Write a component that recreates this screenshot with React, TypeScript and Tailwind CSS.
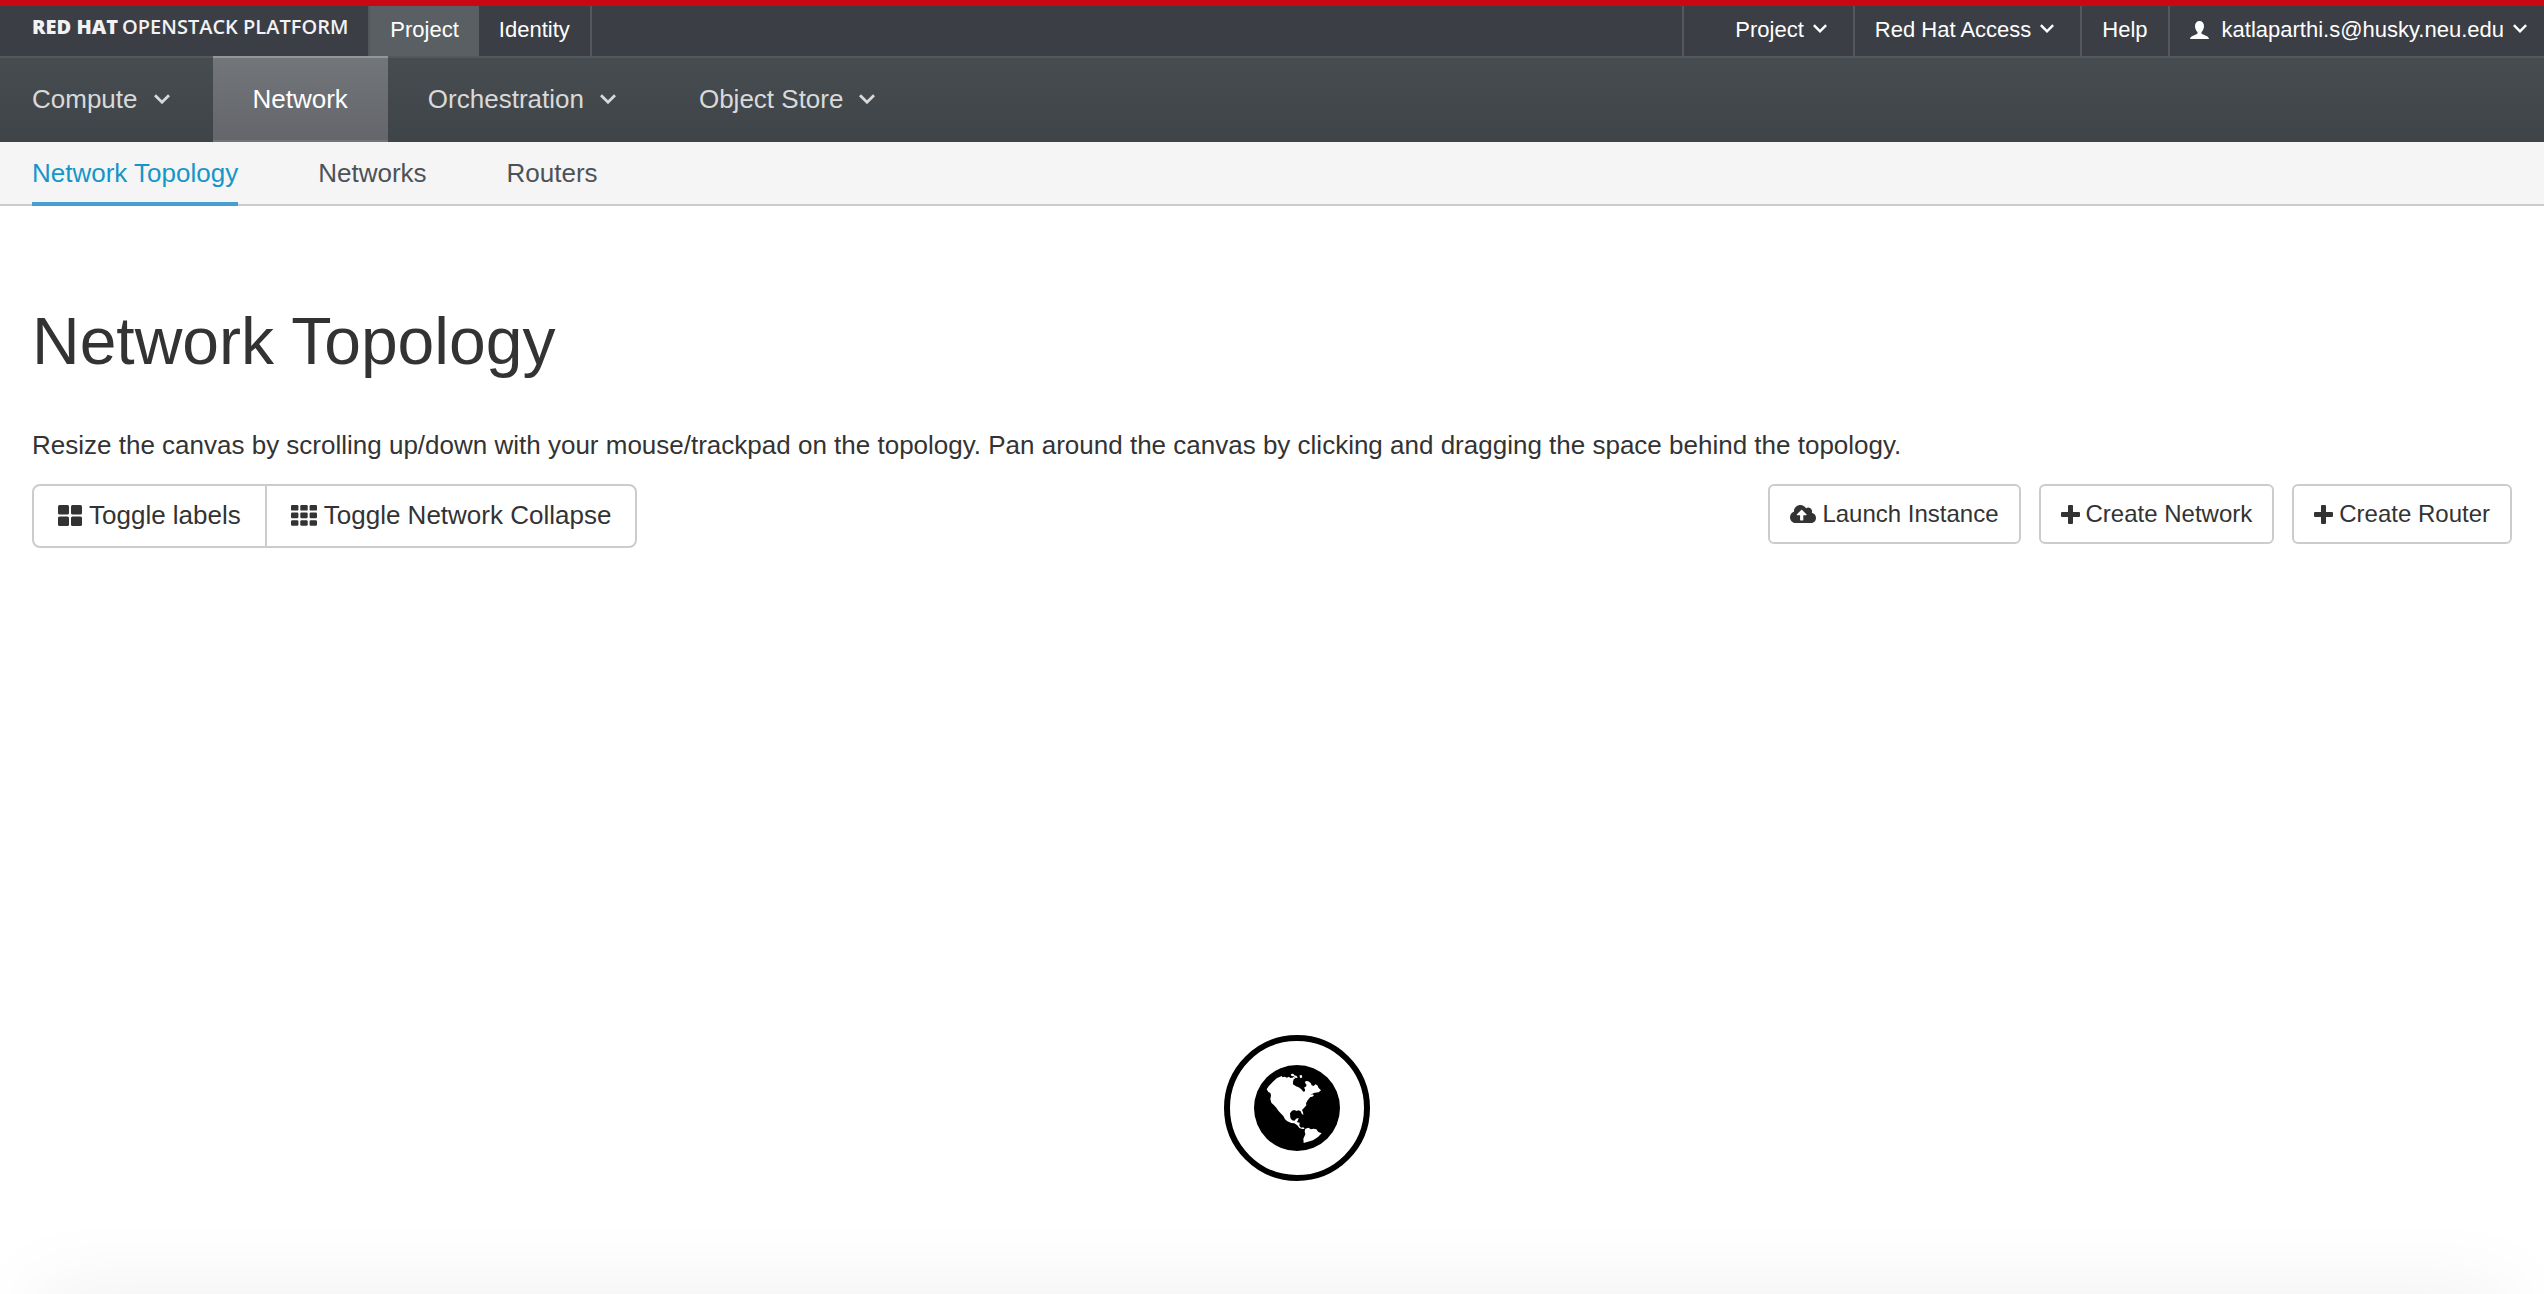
import type { ReactNode } from "react";
import { FaCloudUploadAlt } from "react-icons/fa";

function Chevron({ className }: { className: string }) {
  return (
    <svg className={className} viewBox="0 0 16 10" fill="none" stroke="currentColor" strokeWidth="2.8" aria-hidden="true">
      <path d="M1 1.2 8 8.2 15 1.2" />
    </svg>
  );
}

function UserIcon() {
  return (
    <svg className="h-[18px] w-[19px]" viewBox="0 0 19 18" fill="currentColor" aria-hidden="true">
      <path d="M9.5 0C6.800 0 5 2 5 5c0 2.300 1 4.600 2.200 5.800.6.900.5 1.900-.3 2.300L2 15.200C.8 15.800.1 16.700 0 18h19c-.1-1.300-.8-2.200-2-2.800l-4.900-2.100c-.8-.4-.9-1.400-.3-2.300C13 9.600 14 7.300 14 5c0-3-1.800-5-4.500-5z" />
    </svg>
  );
}

function PlusIcon() {
  return (
    <svg className="h-[19px] w-[19px]" viewBox="0 0 19 19" fill="currentColor" aria-hidden="true">
      <path d="M8 0h3a1 1 0 0 1 1 1v6h6a1 1 0 0 1 1 1v3a1 1 0 0 1-1 1h-6v6a1 1 0 0 1-1 1H8a1 1 0 0 1-1-1v-6H1a1 1 0 0 1-1-1V8a1 1 0 0 1 1-1h6V1a1 1 0 0 1 1-1z" />
    </svg>
  );
}

function GridLarge() {
  return (
    <svg className="h-[21px] w-[24px]" viewBox="0 0 24 21" fill="currentColor" aria-hidden="true">
      {[0, 13].map((x) => [0, 11.5].map((y) => <rect key={`${x}-${y}`} x={x} y={y} width="11" height="9.500" rx="1.500" />))}
    </svg>
  );
}

function GridSmall() {
  return (
    <svg className="h-[21px] w-[26px]" viewBox="0 0 26 21" fill="currentColor" aria-hidden="true">
      {[0, 9.3, 18.6].map((x) => [0, 7.6, 15.2].map((y) => <rect key={`${x}-${y}`} x={x} y={y} width="7.400" height="5.600" rx="1.200" />))}
    </svg>
  );
}

function Globe() {
  return (
    <svg className="h-[86px] w-[86px]" viewBox="14 15 258 258" aria-hidden="true">
      <circle cx="143" cy="144" r="129" fill="#000" />
      <g fill="#fff">
        <path d="M52 88 58 79 70 66 82 55 92 50 98 48 99 52 106 50 113 53 119 50 123 54 130 53 134 50 138 55 133 58 131 66 131 73 140 79 148 82 156 88 162 95 167 94 167 88 164 83 171 79 171 73 167 69 169 63 177 64 184 69 187 76 193 78 198 73 204 76 208 84 215 91 208 97 196 98 189 101 183 106 190 103 194 106 189 110 183 111 175 121 170 130 171 136 164 144 158 150 161 157 162 164 158 163 154 154 147 151 142 153 135 150 128 152 122 160 123 173 128 181 136 182 140 176 148 174 145 183 142 186 151 188 150 197 155 203 162 202 166 207 159 207 150 204 144 196 135 190 126 189 114 184 107 178 102 168 94 160 87 152 81 143 74 136 66 128 63 118 65 106 63 99 57 96Z" />
        <path d="M168 206 178 203 184 208 193 206 201 208 207 216 217 220 206 231 191 241 163 249 162 236 168 223 166 214Z" />
        <path d="M125 42 132 41 135 46 142 48 145 53 139 54 133 49 126 48Z" />
        <path d="M151 46 157 45 159 52 154 55 151 51Z" />
      </g>
    </svg>
  );
}

function TopLink({ children, className }: { children: ReactNode; className: string }) {
  return (
    <a href="#" className={`flex h-full items-center border-l-2 border-[#55575c] pb-0.5 ${className}`}>
      {children}
    </a>
  );
}

function NavItem({ label }: { label: string }) {
  return (
    <button type="button" className="flex items-center gap-4 pr-[43px] pb-0.5 pl-10">
      {label}
      <Chevron className="h-[10px] w-4" />
    </button>
  );
}

function ActionButton({ icon, label }: { icon: ReactNode; label: string }) {
  return (
    <button type="button" className="flex h-[60px] items-center gap-1.5 rounded-md border-2 border-[#ccc] bg-white px-5 text-2xl">
      {icon}
      {label}
    </button>
  );
}

export default function App() {
  return (
    <div className="flex min-h-screen flex-col bg-white font-['Liberation_Sans',Arial,sans-serif] text-[26px] leading-9 text-[#333]">
      <header>
        <div className="flex h-14 items-stretch border-t-[6px] border-[#c90813] bg-[#3b3e45] text-[22px] leading-7 text-white">
          <a href="#" className="flex items-center gap-1 pr-5 pb-2 pl-8 font-['Open_Sans',sans-serif] text-xl text-[#f2f2f2]">
            <span className="font-extrabold">RED HAT</span>
            <span className="font-semibold">OPENSTACK PLATFORM</span>
          </a>
          <nav aria-label="Areas" className="flex border-x-2 border-[#55575c]">
            <a href="#" className="flex items-center bg-[#5a5f63] px-5 pb-0.5">Project</a>
            <a href="#" className="flex items-center px-5 pb-0.5">Identity</a>
          </nav>
          <nav aria-label="Account" className="ml-auto flex">
            <TopLink className="gap-[9px] pr-[26px] pl-[51px]">
              Project
              <Chevron className="mb-1 h-[9px] w-[14px]" />
            </TopLink>
            <TopLink className="gap-[9px] pr-[26px] pl-5">
              Red Hat Access
              <Chevron className="mb-1 h-[9px] w-[14px]" />
            </TopLink>
            <TopLink className="px-5">Help</TopLink>
            <TopLink className="gap-[9px] pr-[17px] pl-5">
              <UserIcon />
              <span className="pl-1">katlaparthi.s@husky.neu.edu</span>
              <Chevron className="mb-1 h-[9px] w-[14px]" />
            </TopLink>
          </nav>
        </div>
        <nav aria-label="Main" className="flex h-[86px] border-t-2 border-[#55575c] bg-linear-to-b from-[#474c50] to-[#3f4448] text-[#d9d9d9]">
          <div className="-ml-2 flex">
            <NavItem label="Compute" />
          </div>
          <a href="#" aria-current="page" className="-mt-0.5 flex items-center border-y-2 border-t-[#94969a] border-b-[#727479] bg-linear-to-b from-[#72757a] to-[#64666b] px-10 text-white">
            Network
          </a>
          <NavItem label="Orchestration" />
          <NavItem label="Object Store" />
        </nav>
        <nav aria-label="Network" className="flex h-16 gap-20 border-b-2 border-[#ccc] bg-[#f5f5f5] px-8 text-[#4d5258]">
          <a href="#" aria-current="page" className="-mb-0.5 flex items-center border-b-4 border-[#459fd3] pt-0.5 text-[#1696c8]">
            Network Topology
          </a>
          <a href="#" className="flex items-center">Networks</a>
          <a href="#" className="flex items-center">Routers</a>
        </nav>
      </header>
      <main className="flex flex-1 flex-col">
        <div className="px-8 pt-[99px]">
          <h1 className="text-[66px] leading-[72px]">Network Topology</h1>
          <p className="mt-[50px]">
            Resize the canvas by scrolling up/down with your mouse/trackpad on the topology. Pan around the canvas by clicking and dragging the space behind the topology.
          </p>
          <div className="mt-[21px] flex items-start justify-between">
            <div className="flex h-16 divide-x-2 divide-[#ccc] rounded-lg border-2 border-[#ccc] bg-white">
              <button type="button" className="flex items-center gap-[7px] px-6 pb-0.5">
                <GridLarge />
                Toggle labels
              </button>
              <button type="button" className="flex items-center gap-[7px] px-6 pb-0.5">
                <GridSmall />
                Toggle Network Collapse
              </button>
            </div>
            <div className="flex gap-[18px]">
              <ActionButton icon={<FaCloudUploadAlt className="text-[26px]" />} label="Launch Instance" />
              <ActionButton icon={<PlusIcon />} label="Create Network" />
              <ActionButton icon={<PlusIcon />} label="Create Router" />
            </div>
          </div>
        </div>
        <section aria-label="Topology canvas" className="relative flex-1 overflow-hidden">
          <div className="absolute top-3/4 left-[51%] flex size-[146px] -translate-x-1/2 -translate-y-1/2 items-center justify-center rounded-full border-[6px] border-black bg-white">
            <Globe />
          </div>
          <div className="absolute inset-x-12 -bottom-6 h-2 shadow-[0_0_80px_10px_rgba(0,0,0,0.13)]" />
        </section>
      </main>
    </div>
  );
}
